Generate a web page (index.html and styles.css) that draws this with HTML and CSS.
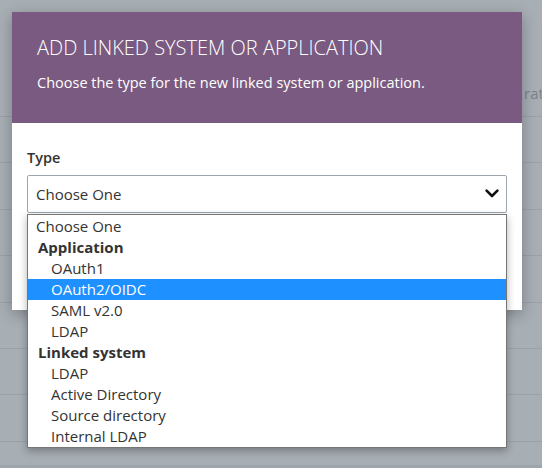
FILE: index.html
```html
<!DOCTYPE html>
<html>
<head>
<meta charset="utf-8">
<link rel="stylesheet" href="styles.css">
</head>
<body>
<div class="page">
  <div class="page-head"><span class="col-title">ration</span></div>
  <div class="row"></div>
  <div class="row"></div>
  <div class="row"></div>
  <div class="row"></div>
  <div class="row"></div>
  <div class="row"></div>
  <div class="row"></div>
  <div class="foot"></div>
</div>

<div class="modal">
  <div class="modal-head">
    <h1 class="modal-title">ADD LINKED SYSTEM OR APPLICATION</h1>
    <p class="modal-sub">Choose the type for the new linked system or application.</p>
  </div>
  <div class="modal-body">
    <label class="field-label">Type</label>
    <div class="select">
      <span>Choose One</span>
      <svg class="chev" width="14" height="9" viewBox="0 0 14 9"><path d="M1.6 1.6 L7 7 L12.4 1.6" fill="none" stroke="#111" stroke-width="2.6" stroke-linecap="round" stroke-linejoin="round"/></svg>
    </div>
  </div>
</div>

<div class="listbox">
  <div class="opt top">Choose One</div>
  <div class="group">Application</div>
  <div class="opt">OAuth1</div>
  <div class="opt selected">OAuth2/OIDC</div>
  <div class="opt">SAML v2.0</div>
  <div class="opt">LDAP</div>
  <div class="group">Linked system</div>
  <div class="opt">LDAP</div>
  <div class="opt">Active Directory</div>
  <div class="opt">Source directory</div>
  <div class="opt">Internal LDAP</div>
</div>
</body>
</html>
```
FILE: styles.css
```css
* { box-sizing: border-box; }
html, body { margin: 0; padding: 0; }
body {
  width: 542px;
  height: 468px;
  overflow: hidden;
  background: #a7aeb4;
  font-family: "Open Sans", "Noto Sans", sans-serif;
  position: relative;
}
.page { display: flex; flex-direction: column; height: 468px; }
.page-head {
  height: 117px;
  flex: none;
  border-bottom: 1px solid #9aa1a7;
  display: flex;
  align-items: flex-end;
  padding-left: 524px;
  padding-bottom: 13px;
  overflow: hidden;
}
.col-title { color: #7c848b; font-size: 15px; line-height: 20px; white-space: nowrap; }
.row { height: 46.4px; border-bottom: 1px solid #9aa1a7; flex: none; }
.foot { flex: 1; display: flex; flex-direction: column; justify-content: flex-end; }
.foot::after { content: ""; height: 3px; background: #9ea5ab; }

.modal {
  position: absolute;
  left: 12px;
  top: 12px;
  width: 510px;
  height: 298px;
  background: #fff;
  box-shadow: 0 4px 14px rgba(0,0,0,0.28);
}
.modal-head {
  height: 111px;
  background: #7a5a80;
  padding: 22px 24px 0 25px;
  color: #fff;
}
.modal-title {
  margin: 0;
  font-size: 20px;
  font-weight: 300;
  line-height: 28px;
}
.modal-sub {
  margin: 11px 0 0;
  font-size: 14.5px;
  line-height: 20px;
}
.modal-body { padding: 25px 15px 0 15px; }
.field-label {
  display: block;
  font-size: 14.5px;
  font-weight: 600;
  color: #333;
  line-height: 20px;
}
.select {
  margin-top: 7px;
  height: 38px;
  border: 1px solid #9da6ad;
  border-radius: 2px;
  display: flex;
  align-items: center;
  justify-content: space-between;
  padding: 0 7px 0 8px;
  font-size: 15px;
  color: #333;
}
.chev { margin-top: -2px; }

.listbox {
  position: absolute;
  left: 27px;
  top: 214px;
  width: 480px;
  height: 234px;
  background: #fff;
  border: 1px solid #767676;
  padding-top: 1px;
  box-shadow: 0 3px 8px rgba(0,0,0,0.3);
  font-size: 15px;
  color: #333;
}
.opt, .group {
  height: 21px;
  line-height: 21px;
  white-space: nowrap;
}
.opt { padding-left: 23px; }
.opt.top { padding-left: 8px; }
.group { padding-left: 10px; font-weight: 700; }
.selected { background: #1e90ff; color: #fff; }
```
